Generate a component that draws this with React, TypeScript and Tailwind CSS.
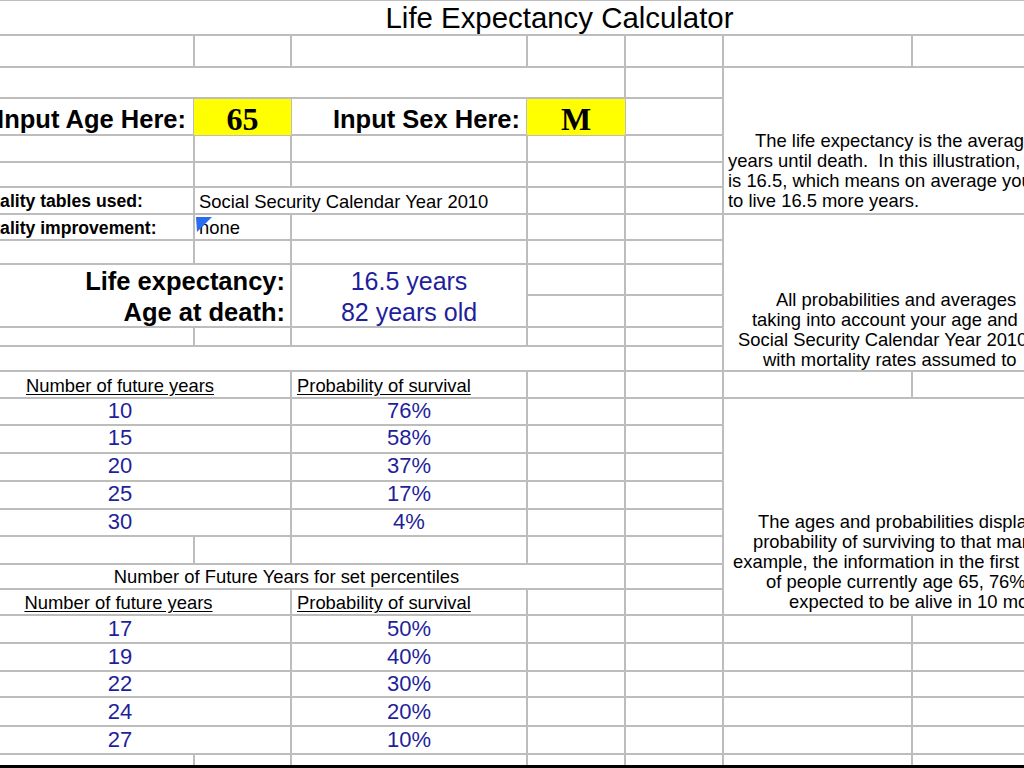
import React from "react";

const R = [
  "",
  "row-start-1",
  "row-start-2",
  "row-start-3",
  "row-start-4",
  "row-start-5",
  "row-start-6",
  "row-start-7",
  "row-start-8",
  "row-start-9",
  "row-start-10",
  "row-start-11",
  "row-start-12",
  "row-start-13",
  "row-start-14",
  "row-start-15",
  "row-start-16",
  "row-start-17",
  "row-start-18",
  "row-start-19",
  "row-start-20",
  "row-start-21",
  "row-start-22",
  "row-start-23",
  "row-start-24",
  "row-start-25",
  "row-start-26",
  "row-start-27",
  "row-start-28",
];

function C({ c, children }: { c: string; children?: React.ReactNode }) {
  return <div className={"bg-white overflow-hidden " + c}>{children}</div>;
}

const BLUE = "text-[#1f1f9c]";

function EmptyRow({ row, cols }: { row: number; cols: string[] }) {
  return (
    <>
      {cols.map((col) => (
        <C key={col + row} c={col + " " + R[row]} />
      ))}
    </>
  );
}

const firstTable = [
  ["10", "76%"],
  ["15", "58%"],
  ["20", "37%"],
  ["25", "17%"],
  ["30", "4%"],
];

const secondTable = [
  ["17", "50%"],
  ["19", "40%"],
  ["22", "30%"],
  ["24", "20%"],
  ["27", "10%"],
];

export default function App() {
  return (
    <div className="w-[1024px] h-[768px] overflow-hidden bg-white font-['Liberation_Sans',Arial,sans-serif] text-black">
      <div className="grid grid-cols-[193px_95px_234px_96px_96px_187px_111px] grid-rows-[33px_30px_29px_35px_25px_23px_25px_24px_22px_29px_30px_17px_23px_25px_25px_26px_26px_26px_25px_26px_23px_24px_26px_26px_24px_27px_26px_10px] gap-[2px] bg-[#bdbdbd] pt-[1px]">
        {/* Row 1: title */}
        <C c="col-start-1 col-span-7 row-start-1 flex items-center justify-center pl-[95px] pt-[1px] text-[29.4px] leading-none">
          Life Expectancy Calculator
        </C>

        {/* Row 2 */}
        <EmptyRow
          row={2}
          cols={["col-start-1", "col-start-2", "col-start-3", "col-start-4", "col-start-5", "col-start-6", "col-start-7"]}
        />

        {/* Row 3 */}
        <C c="col-start-1 col-span-4 row-start-3" />
        <C c="col-start-5 row-start-3" />
        <C c="col-start-6 col-span-2 row-start-3 row-span-5 flex flex-col justify-end pb-[2px] text-[18.4px] leading-[20px] whitespace-pre">
          <div className="pl-[31px]">The life expectancy is the average number of</div>
          <div className="pl-[4px]">years until death.  In this illustration,</div>
          <div className="pl-[4px]">is 16.5, which means on average you are expected</div>
          <div className="pl-[4px]">to live 16.5 more years.</div>
        </C>

        {/* Row 4 */}
        <C c="col-start-1 row-start-4 flex items-center justify-end pt-[7px] pr-[7px] text-[25.5px] font-bold leading-none whitespace-nowrap">
          Input Age Here:
        </C>
        <div className="col-start-2 row-start-4 -mx-[1px] -mb-[1px] relative z-10 bg-[#ffff00] flex items-center justify-center pt-[3px] font-['Liberation_Serif','Times_New_Roman',serif] text-[32px] font-bold leading-none">
          65
        </div>
        <C c="col-start-3 row-start-4 flex items-center justify-end pt-[7px] pr-[6px] text-[25.5px] font-bold leading-none whitespace-nowrap">
          Input Sex Here:
        </C>
        <div className="col-start-4 row-start-4 -mx-[1px] -mb-[1px] relative z-10 bg-[#ffff00] flex items-center justify-center pt-[3px] font-['Liberation_Serif','Times_New_Roman',serif] text-[32px] font-bold leading-none">
          M
        </div>
        <C c="col-start-5 row-start-4" />

        {/* Rows 5-6 */}
        <EmptyRow row={5} cols={["col-start-1", "col-start-2", "col-start-3", "col-start-4", "col-start-5"]} />
        <EmptyRow row={6} cols={["col-start-1", "col-start-2", "col-start-3", "col-start-4", "col-start-5"]} />

        {/* Row 7 */}
        <C c="col-start-1 row-start-7 flex items-center pt-[3px] text-[17.6px] font-bold leading-none whitespace-nowrap">
          <span className="ml-[-38px]">Mortality tables used:</span>
        </C>
        <C c="col-start-2 col-span-2 row-start-7 flex items-center pt-[3px] pl-[4px] text-[18.4px] leading-none whitespace-nowrap">
          Social Security Calendar Year 2010
        </C>
        <C c="col-start-4 row-start-7" />
        <C c="col-start-5 row-start-7" />

        {/* Row 8 */}
        <C c="col-start-1 row-start-8 flex items-center pt-[3px] text-[17.6px] font-bold leading-none whitespace-nowrap">
          <span className="ml-[-38px]">Mortality improvement:</span>
        </C>
        <C c="col-start-2 row-start-8 relative flex items-center pt-[2px] pl-[4px] text-[18.4px] leading-none">
          none
          <svg className="absolute left-[1px] top-[2px]" width="16" height="15" viewBox="0 0 16 15">
            <polygon points="0,0 16,0 1,15" fill="#2a6cf0" />
          </svg>
        </C>
        <C c="col-start-3 row-start-8" />
        <C c="col-start-4 row-start-8" />
        <C c="col-start-5 row-start-8" />
        <C c="col-start-6 col-span-2 row-start-8 row-span-6 flex flex-col justify-end text-[18.4px] leading-[20px] whitespace-pre">
          <div className="pl-[52px]">All probabilities and averages</div>
          <div className="pl-[28px]">taking into account your age and</div>
          <div className="pl-[14px]">Social Security Calendar Year 2010</div>
          <div className="pl-[39px]">with mortality rates assumed to</div>
        </C>

        {/* Row 9 */}
        <EmptyRow row={9} cols={["col-start-1", "col-start-2", "col-start-3", "col-start-4", "col-start-5"]} />

        {/* Rows 10-11 */}
        <C c="col-start-1 col-span-2 row-start-10 row-span-2 flex flex-col text-[25.5px] font-bold leading-none whitespace-nowrap">
          <div className="h-[31px] flex items-center justify-end pr-[5px] pt-[2px]">Life expectancy:</div>
          <div className="flex-1 flex items-center justify-end pr-[5px] pt-[3px]">Age at death:</div>
        </C>
        <C c={"col-start-3 row-start-10 row-span-2 flex flex-col text-[25px] leading-none whitespace-nowrap " + BLUE}>
          <div className="h-[31px] flex items-center justify-center pt-[2px]">16.5 years</div>
          <div className="flex-1 flex items-center justify-center pt-[3px]">82 years old</div>
        </C>
        <C c="col-start-4 row-start-10" />
        <C c="col-start-5 row-start-10" />
        <C c="col-start-4 row-start-11" />
        <C c="col-start-5 row-start-11" />

        {/* Row 12 */}
        <EmptyRow row={12} cols={["col-start-1", "col-start-2", "col-start-3", "col-start-4", "col-start-5"]} />

        {/* Row 13 */}
        <C c="col-start-1 col-span-4 row-start-13" />
        <C c="col-start-5 row-start-13" />

        {/* Row 14: table header */}
        <C c="col-start-1 col-span-2 row-start-14 flex items-center justify-center pr-[50px] pt-[3px] text-[18.4px] leading-none whitespace-nowrap">
          <span className="underline underline-offset-2">Number of future years</span>
        </C>
        <C c="col-start-3 row-start-14 flex items-center pl-[5px] pt-[3px] text-[18.4px] leading-none whitespace-nowrap">
          <span className="underline underline-offset-2">Probability of survival</span>
        </C>
        <C c="col-start-4 row-start-14" />
        <C c="col-start-5 row-start-14" />
        <C c="col-start-6 row-start-14" />
        <C c="col-start-7 row-start-14" />

        {/* Rows 15-19 */}
        {firstTable.map(([n, p], i) => (
          <React.Fragment key={"a" + i}>
            <C c={"col-start-1 col-span-2 flex items-center justify-center pr-[50px] pb-[2px] text-[22px] leading-none " + BLUE + " " + R[15 + i]}>
              {n}
            </C>
            <C c={"col-start-3 flex items-center justify-center pb-[2px] text-[22px] leading-none " + BLUE + " " + R[15 + i]}>
              {p}
            </C>
            <C c={"col-start-4 " + R[15 + i]} />
            <C c={"col-start-5 " + R[15 + i]} />
          </React.Fragment>
        ))}
        <C c="col-start-6 col-span-2 row-start-15 row-span-8 flex flex-col justify-end pb-[2px] text-[18.4px] leading-[20px] whitespace-pre">
          <div className="pl-[34px]">The ages and probabilities displayed show the</div>
          <div className="pl-[29px]">probability of surviving to that many years.  For</div>
          <div className="pl-[9px]">example, the information in the first row shows that</div>
          <div className="pl-[42px]">of people currently age 65, 76% are</div>
          <div className="pl-[65px]">expected to be alive in 10 more years.</div>
        </C>

        {/* Row 20 */}
        <EmptyRow row={20} cols={["col-start-1", "col-start-2", "col-start-3", "col-start-4", "col-start-5"]} />

        {/* Row 21 */}
        <C c="col-start-1 col-span-4 row-start-21 flex items-center justify-center pr-[51px] pt-[2px] text-[18.4px] leading-none whitespace-nowrap">
          Number of Future Years for set percentiles
        </C>
        <C c="col-start-5 row-start-21" />

        {/* Row 22 */}
        <C c="col-start-1 col-span-2 row-start-22 flex items-center justify-center pr-[53px] pt-[3px] text-[18.4px] leading-none whitespace-nowrap">
          <span className="underline underline-offset-2">Number of future years</span>
        </C>
        <C c="col-start-3 row-start-22 flex items-center pl-[5px] pt-[3px] text-[18.4px] leading-none whitespace-nowrap">
          <span className="underline underline-offset-2">Probability of survival</span>
        </C>
        <C c="col-start-4 row-start-22" />
        <C c="col-start-5 row-start-22" />

        {/* Rows 23-27 */}
        {secondTable.map(([n, p], i) => (
          <React.Fragment key={"b" + i}>
            <C c={"col-start-1 col-span-2 flex items-center justify-center pr-[50px] text-[22px] leading-none " + BLUE + " " + R[23 + i]}>
              {n}
            </C>
            <C c={"col-start-3 flex items-center justify-center text-[22px] leading-none " + BLUE + " " + R[23 + i]}>
              {p}
            </C>
            <C c={"col-start-4 " + R[23 + i]} />
            <C c={"col-start-5 " + R[23 + i]} />
            <C c={"col-start-6 " + R[23 + i]} />
            <C c={"col-start-7 " + R[23 + i]} />
          </React.Fragment>
        ))}

        {/* Row 28 */}
        <EmptyRow
          row={28}
          cols={["col-start-1", "col-start-2", "col-start-3", "col-start-4", "col-start-5", "col-start-6", "col-start-7"]}
        />
      </div>
      <div className="h-[3px] bg-black" />
    </div>
  );
}
